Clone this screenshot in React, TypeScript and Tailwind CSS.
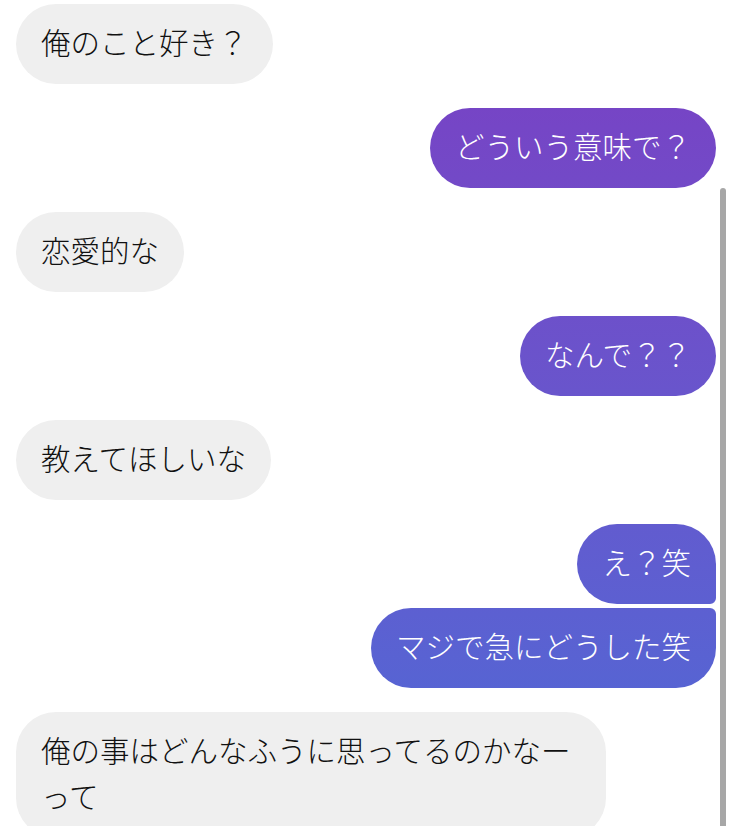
type Message = {
  id: number;
  text: string;
  mine: boolean;
  corner?: "first" | "last";
};

const messages: Message[] = [
  { id: 1, text: "俺のこと好き？", mine: false },
  { id: 2, text: "どういう意味で？", mine: true },
  { id: 3, text: "恋愛的な", mine: false },
  { id: 4, text: "なんで？？", mine: true },
  { id: 5, text: "教えてほしいな", mine: false },
  { id: 6, text: "え？笑", mine: true, corner: "first" },
  { id: 7, text: "マジで急にどうした笑", mine: true, corner: "last" },
  { id: 8, text: "俺の事はどんなふうに思ってるのかなーって", mine: false },
];

function Bubble({ message }: { message: Message }) {
  const base =
    "max-w-[590px] px-[25px] pt-[14px] pb-[20px] text-[29.5px] font-light leading-[46px] break-all";
  if (!message.mine) {
    return (
      <div className="flex justify-start">
        <div className={`${base} rounded-[40px] bg-[#efefef] text-[#111111]`}>{message.text}</div>
      </div>
    );
  }
  const radius =
    message.corner === "first"
      ? "rounded-[40px] rounded-br-[6px]"
      : message.corner === "last"
        ? "rounded-[40px] rounded-tr-[6px]"
        : "rounded-[40px]";
  return (
    <div className="flex justify-end">
      <div
        className={`${base} ${radius} bg-fixed bg-linear-to-b from-[#7a3ec3] to-[#4c6ad6] text-white`}
      >
        {message.text}
      </div>
    </div>
  );
}

export default function App() {
  return (
    <div
      className="relative h-[826px] w-[732px] overflow-hidden bg-white"
      style={{ fontFamily: '"Noto Sans CJK JP", "Noto Sans", sans-serif' }}
    >
      <div className="flex flex-col px-4 pt-1">
        {messages.map((m, i) => {
          const prev = messages[i - 1];
          const grouped = prev && prev.mine === m.mine;
          return (
            <div key={m.id} className={i === 0 ? "" : grouped ? "mt-[4px]" : "mt-[24px]"}>
              <Bubble message={m} />
            </div>
          );
        })}
      </div>
      {/* overlay scrollbar */}
      <div className="absolute left-[720px] top-[188px] h-[660px] w-[6px] rounded-full bg-[#a7a7a7]" />
    </div>
  );
}
